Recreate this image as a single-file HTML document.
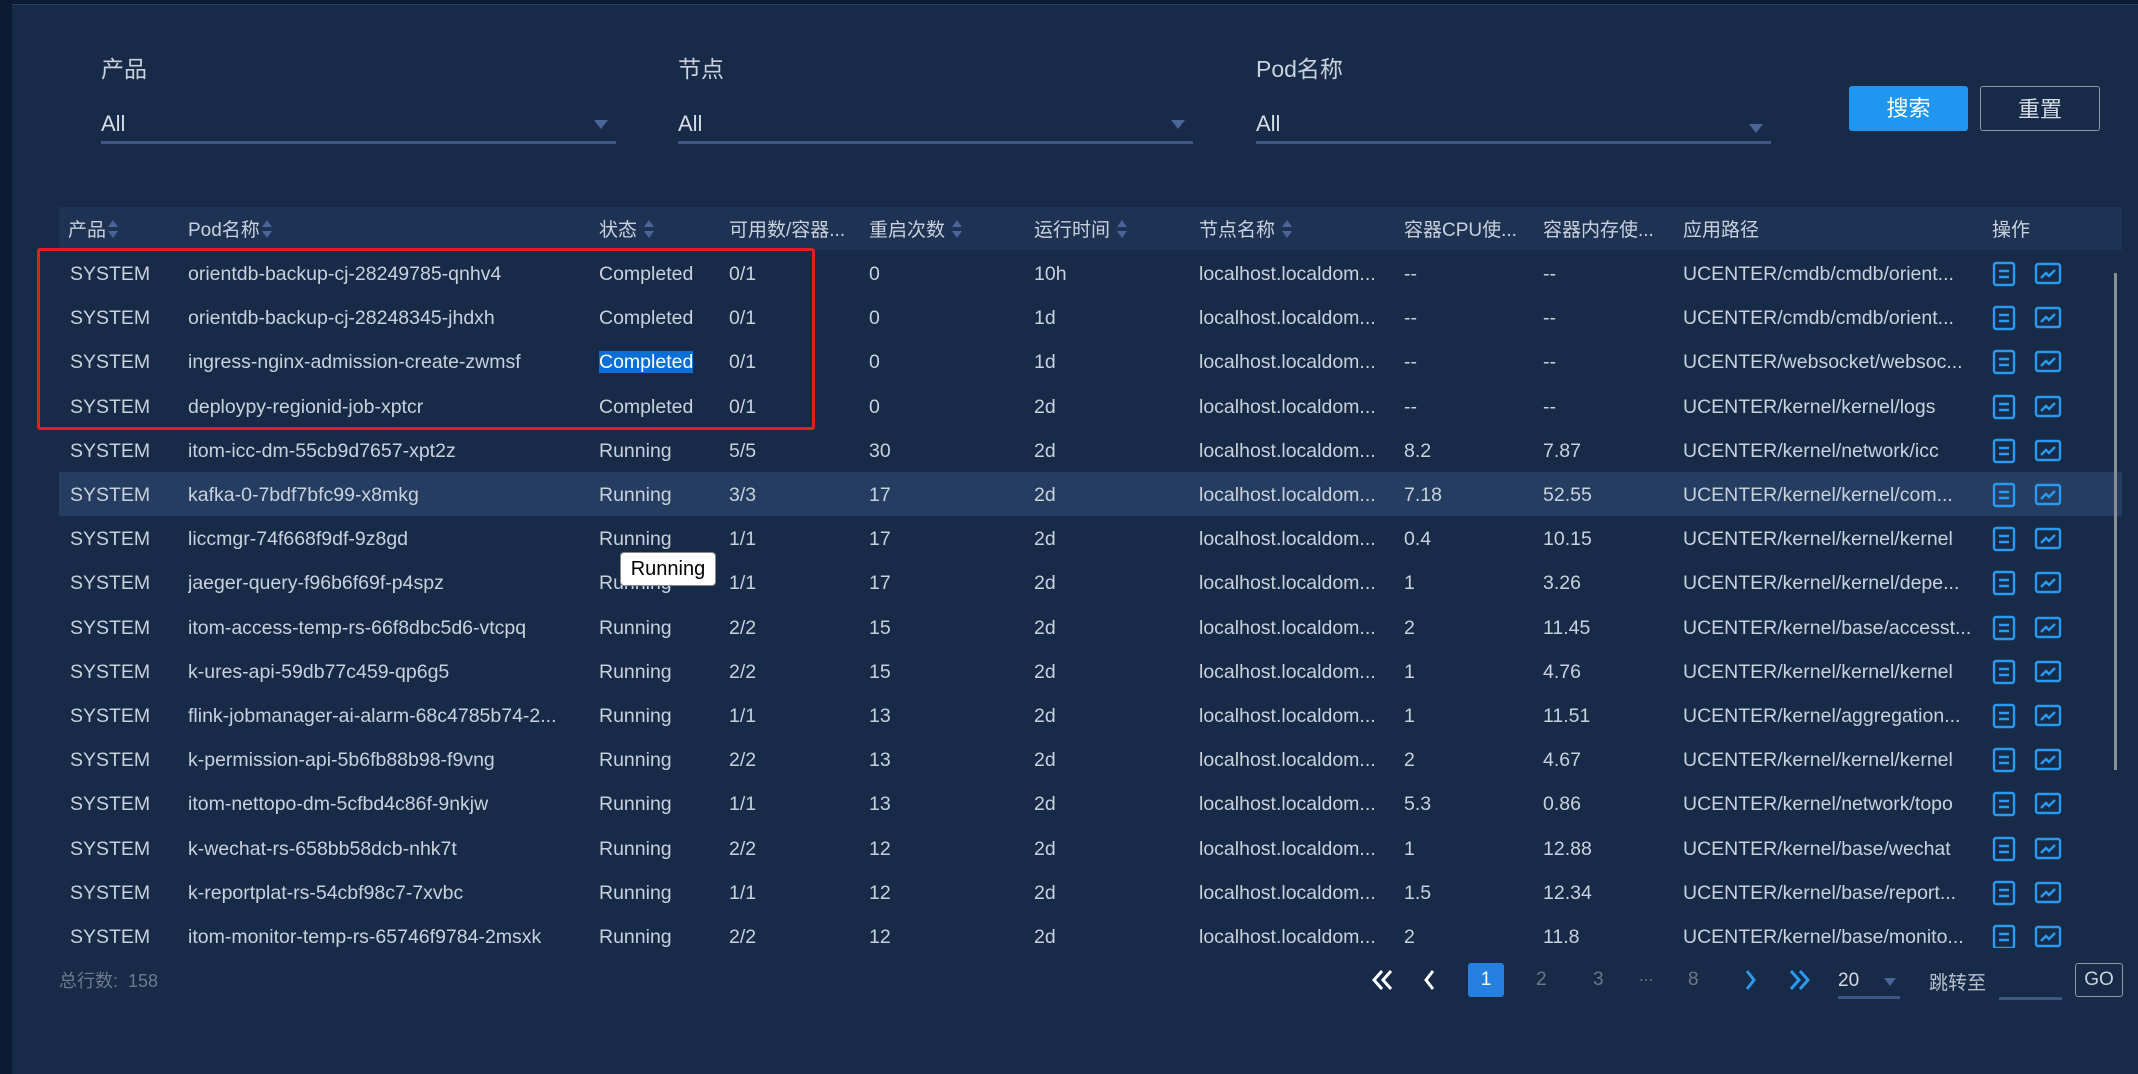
<!DOCTYPE html>
<html><head><meta charset="utf-8"><style>
*{margin:0;padding:0;box-sizing:border-box}
body{width:2138px;height:1074px;overflow:hidden;background:#0c1a33;font-family:"Liberation Sans","Noto Sans CJK SC",sans-serif;color:#c9d1dd;position:relative}
.panel{position:absolute;left:12px;top:4px;width:2126px;height:1070px;background:#172a48;border-top:1px solid #2a3d5c}
.a{position:absolute;white-space:nowrap}
.lbl{font-size:23px;color:#c9d1dd;top:50px}
.sel{position:absolute;top:106px;height:38px;border-bottom:3px solid #3f5785;font-size:22px;color:#d6dce6}
.sel span{position:absolute;left:0;top:5px}
.tri{position:absolute;right:8px;top:14px;width:0;height:0;border-left:7px solid transparent;border-right:7px solid transparent;border-top:9px solid #4a6596}
.btn{position:absolute;top:86px;height:45px;font-size:22px;text-align:center;line-height:45px;border-radius:3px}
.hdr{position:absolute;left:59px;top:207px;width:2063px;height:43px;background:#1e3354}
.h{position:absolute;top:215px;font-size:19px;color:#c9d1dd;white-space:nowrap}
.sort{display:inline-block;vertical-align:middle;margin-left:2px;width:10px;height:18px;position:relative;top:-2px}
.sort:before{content:"";position:absolute;top:0;left:0;border-left:5px solid transparent;border-right:5px solid transparent;border-bottom:7px solid #4a6596}
.sort:after{content:"";position:absolute;bottom:0;left:0;border-left:5px solid transparent;border-right:5px solid transparent;border-top:7px solid #4a6596}
.body{position:absolute;left:59px;top:251px;width:2063px;height:697px;overflow:hidden}
.row{position:absolute;left:0;width:2063px;height:44px;font-size:19.5px}
.row.hl{background:#243d60}
.row div{position:absolute;top:12px;white-space:nowrap;overflow:hidden}
.ic{position:absolute;top:10px}
</style></head><body>
<div class="panel"></div>
<div class="a lbl" style="left:101px">产品</div>
<div class="a lbl" style="left:678px">节点</div>
<div class="a lbl" style="left:1256px">Pod名称</div>
<div class="sel" style="left:101px;width:515px"><span>All</span><i class="tri"></i></div>
<div class="sel" style="left:678px;width:515px"><span>All</span><i class="tri"></i></div>
<div class="sel" style="left:1256px;width:515px"><span>All</span><i class="tri" style="top:18px"></i></div>
<div class="btn" style="left:1849px;width:119px;background:#2196f0;color:#fff">搜索</div>
<div class="btn" style="left:1980px;width:120px;border:1.5px solid #8e99a8;color:#d6dce6">重置</div>

<div class="hdr"></div>
<div class="h" style="left:68px">产品<i class="sort"></i></div>
<div class="h" style="left:188px">Pod名称<i class="sort"></i></div>
<div class="h" style="left:599px">状态 <i class="sort"></i></div>
<div class="h" style="left:729px">可用数/容器...</div>
<div class="h" style="left:869px">重启次数 <i class="sort"></i></div>
<div class="h" style="left:1034px">运行时间 <i class="sort"></i></div>
<div class="h" style="left:1199px">节点名称 <i class="sort"></i></div>
<div class="h" style="left:1404px">容器CPU使...</div>
<div class="h" style="left:1543px">容器内存使...</div>
<div class="h" style="left:1683px">应用路径</div>
<div class="h" style="left:1992px">操作</div>

<div class="body" id="tb"></div>
<div class="a" style="left:2114px;top:273px;width:3px;height:497px;background:#8a8f96"></div>

<div class="a" style="left:37px;top:248px;width:778px;height:182px;border:3px solid #e3211b;border-radius:3px"></div>

<div class="a" style="left:620px;top:552px;width:96px;height:34px;background:#fff;border:1px solid #888;border-radius:4px;color:#000;font-size:20px;line-height:32px;text-align:center">Running</div>

<div class="a" style="left:59px;top:967px;font-size:18px;color:#6d7a8c">总行数:&nbsp;&nbsp;158</div>
<svg class="a" style="left:1370px;top:968px" width="26" height="24" viewBox="0 0 26 24"><path d="M12 3 4 12l8 9M21 3l-8 9 8 9" fill="none" stroke="#fff" stroke-width="3"/></svg>
<svg class="a" style="left:1422px;top:968px" width="16" height="24" viewBox="0 0 16 24"><path d="M11 3 4 12l7 9" fill="none" stroke="#fff" stroke-width="3"/></svg>
<div class="a" style="left:1468px;top:963px;width:36px;height:34px;background:#2680e0;border-radius:3px;color:#fff;font-size:19px;text-align:center;line-height:34px">1</div>
<div class="a" style="left:1536px;top:969px;font-size:19px;color:#6e7785">2</div>
<div class="a" style="left:1593px;top:969px;font-size:19px;color:#6e7785">3</div>
<div class="a" style="left:1639px;top:966px;font-size:17px;color:#6e7785">...</div>
<div class="a" style="left:1688px;top:969px;font-size:19px;color:#6e7785">8</div>
<svg class="a" style="left:1742px;top:968px" width="16" height="24" viewBox="0 0 16 24"><path d="M5 3l7 9-7 9" fill="none" stroke="#2a9af0" stroke-width="3"/></svg>
<svg class="a" style="left:1786px;top:968px" width="26" height="24" viewBox="0 0 26 24"><path d="M5 3l8 9-8 9M14 3l8 9-8 9" fill="none" stroke="#2a9af0" stroke-width="3"/></svg>
<div class="a" style="left:1838px;top:964px;width:62px;height:35px;border-bottom:3px solid #3f5785;font-size:19px;color:#d6dce6;padding-top:6px">20<i class="tri" style="right:4px;top:14px;border-left-width:6px;border-right-width:6px;border-top-width:8px"></i></div>
<div class="a" style="left:1929px;top:968px;font-size:19px;color:#b7c0cc">跳转至</div>
<div class="a" style="left:1999px;top:997px;width:63px;height:3px;background:#3f5785"></div>
<div class="a" style="left:2075px;top:963px;width:48px;height:34px;border:1.5px solid #8e99a8;border-radius:3px;font-size:19px;color:#c9d1dd;text-align:center;line-height:32px">GO</div>

<script>
var d=[
["orientdb-backup-cj-28249785-qnhv4","Completed","0/1","0","10h","--","--","UCENTER/cmdb/cmdb/orient..."],
["orientdb-backup-cj-28248345-jhdxh","Completed","0/1","0","1d","--","--","UCENTER/cmdb/cmdb/orient..."],
["ingress-nginx-admission-create-zwmsf","Completed","0/1","0","1d","--","--","UCENTER/websocket/websoc..."],
["deploypy-regionid-job-xptcr","Completed","0/1","0","2d","--","--","UCENTER/kernel/kernel/logs"],
["itom-icc-dm-55cb9d7657-xpt2z","Running","5/5","30","2d","8.2","7.87","UCENTER/kernel/network/icc"],
["kafka-0-7bdf7bfc99-x8mkg","Running","3/3","17","2d","7.18","52.55","UCENTER/kernel/kernel/com..."],
["liccmgr-74f668f9df-9z8gd","Running","1/1","17","2d","0.4","10.15","UCENTER/kernel/kernel/kernel"],
["jaeger-query-f96b6f69f-p4spz","Running","1/1","17","2d","1","3.26","UCENTER/kernel/kernel/depe..."],
["itom-access-temp-rs-66f8dbc5d6-vtcpq","Running","2/2","15","2d","2","11.45","UCENTER/kernel/base/accesst..."],
["k-ures-api-59db77c459-qp6g5","Running","2/2","15","2d","1","4.76","UCENTER/kernel/kernel/kernel"],
["flink-jobmanager-ai-alarm-68c4785b74-2...","Running","1/1","13","2d","1","11.51","UCENTER/kernel/aggregation..."],
["k-permission-api-5b6fb88b98-f9vng","Running","2/2","13","2d","2","4.67","UCENTER/kernel/kernel/kernel"],
["itom-nettopo-dm-5cfbd4c86f-9nkjw","Running","1/1","13","2d","5.3","0.86","UCENTER/kernel/network/topo"],
["k-wechat-rs-658bb58dcb-nhk7t","Running","2/2","12","2d","1","12.88","UCENTER/kernel/base/wechat"],
["k-reportplat-rs-54cbf98c7-7xvbc","Running","1/1","12","2d","1.5","12.34","UCENTER/kernel/base/report..."],
["itom-monitor-temp-rs-65746f9784-2msxk","Running","2/2","12","2d","2","11.8","UCENTER/kernel/base/monito..."]];
var doc='<svg width="24" height="26" viewBox="0 0 24 26"><rect x="2" y="2" width="20" height="22" rx="2" fill="none" stroke="#2a9af0" stroke-width="2.4"/><path d="M7 10h10M7 16h10" stroke="#2a9af0" stroke-width="2.4"/></svg>';
var ch='<svg width="28" height="24" viewBox="0 0 28 24"><rect x="2" y="2" width="24" height="19" rx="2" fill="none" stroke="#2a9af0" stroke-width="2.4"/><path d="M7 16l5-5 3 3 6-6" fill="none" stroke="#2a9af0" stroke-width="2.4"/></svg>';
var h='';
d.forEach(function(r,i){
var st=i==2?'<span style="background:#0a6ed6;color:#fff">'+r[1]+'</span>':r[1];
h+='<div class="row'+(i==5?' hl':'')+'" style="top:'+(i*44.2)+'px">'+
'<div style="left:11px">SYSTEM</div><div style="left:129px;width:400px">'+r[0]+'</div><div style="left:540px">'+st+'</div><div style="left:670px">'+r[2]+'</div><div style="left:810px">'+r[3]+'</div><div style="left:975px">'+r[4]+'</div><div style="left:1140px">localhost.localdom...</div><div style="left:1345px">'+r[5]+'</div><div style="left:1484px">'+r[6]+'</div><div style="left:1624px;width:290px">'+r[7]+'</div><span class="ic" style="left:1933px">'+doc+'</span><span class="ic" style="left:1975px;top:11px">'+ch+'</span></div>';});
document.getElementById('tb').innerHTML=h;
</script>
</body></html>
